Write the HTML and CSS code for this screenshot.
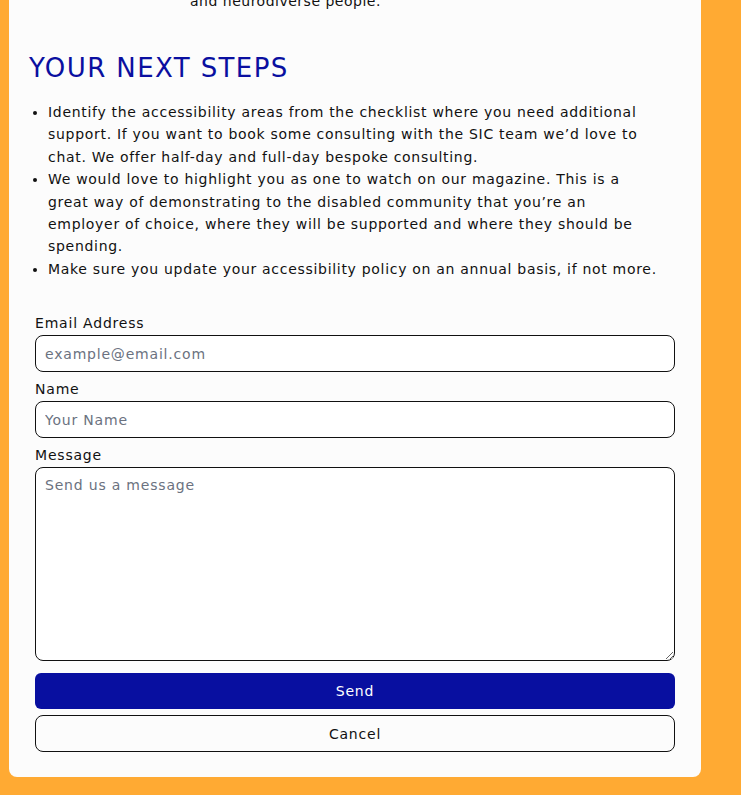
FILE: index.html
```html
<!DOCTYPE html>
<html lang="en">
<head>
<meta charset="utf-8">
<title>Your next steps</title>
<link rel="stylesheet" href="styles.css">
</head>
<body>
<main class="card">
  <p class="intro">and neurodiverse people.</p>
  <h2 class="heading">YOUR NEXT STEPS</h2>
  <ul class="steps">
    <li>Identify the accessibility areas from the checklist where you need additional support. If you want to book some consulting with the SIC team we’d love to chat. We offer half-day and full-day bespoke consulting.</li>
    <li>We would love to highlight you as one to watch on our magazine. This is a great way of demonstrating to the disabled community that you’re an employer of choice, where they will be supported and where they should be spending.</li>
    <li>Make sure you update your accessibility policy on an annual basis, if not more.</li>
  </ul>
  <form class="form">
    <label class="label" for="email">Email Address</label>
    <input class="field" id="email" type="email" placeholder="example@email.com">
    <label class="label gap" for="name">Name</label>
    <input class="field" id="name" type="text" placeholder="Your Name">
    <label class="label gap" for="msg">Message</label>
    <textarea class="field area" id="msg" placeholder="Send us a message"></textarea>
    <button class="btn send" type="button">Send</button>
    <button class="btn cancel" type="button">Cancel</button>
  </form>
</main>
</body>
</html>
```
FILE: styles.css
```css
html, body {
  margin: 0;
  padding: 0;
}
body {
  background: #ffaa33;
  font-family: "DejaVu Sans", sans-serif;
  color: #111;
  letter-spacing: 0.5px;
  overflow: hidden;
}
.card {
  box-sizing: border-box;
  width: 692px;
  margin: -10px 0 18px 9px;
  background: #fcfcfc;
  border-radius: 0 0 8px 8px;
  padding: 0 26px 25px 20px;
}
.intro {
  margin: 0;
  padding-left: 161px;
  font-size: 14px;
  line-height: 22px;
}
.heading {
  margin: 41px 0 0 0;
  font-size: 26px;
  font-weight: 400;
  line-height: 31px;
  letter-spacing: 1.4px;
  color: #0a0fa0;
}
.steps {
  margin: 17px 0 0 0;
  padding-left: 19px;
  padding-right: 13px;
  font-size: 14px;
  line-height: 22.4px;
  letter-spacing: 0.7px;
}
.form {
  display: flex;
  flex-direction: column;
  margin: 34px 0 0 6px;
}
.label {
  font-size: 14px;
  line-height: 18px;
  margin-bottom: 3px;
  letter-spacing: 0.8px;
}
.label.gap {
  margin-top: 8px;
}
.field {
  box-sizing: border-box;
  height: 37px;
  border: 1px solid #111;
  border-radius: 8px;
  background: #fff;
  padding: 0 9px;
  font-family: inherit;
  font-size: 14px;
  letter-spacing: 0.8px;
  color: #111;
}
.field::placeholder {
  color: #6b7280;
}
.area {
  height: 194px;
  padding: 9px 9px;
  resize: vertical;
}
.btn {
  box-sizing: border-box;
  height: 37px;
  font-family: inherit;
  font-size: 14px;
  letter-spacing: 0.8px;
  border-radius: 8px;
}
.send {
  margin-top: 12px;
  height: 36px;
  background: #080fa0;
  border: none;
  border-radius: 6px;
  color: #fff;
}
.cancel {
  margin-top: 6px;
  background: #fcfcfc;
  border: 1px solid #111;
  color: #111;
}
```
